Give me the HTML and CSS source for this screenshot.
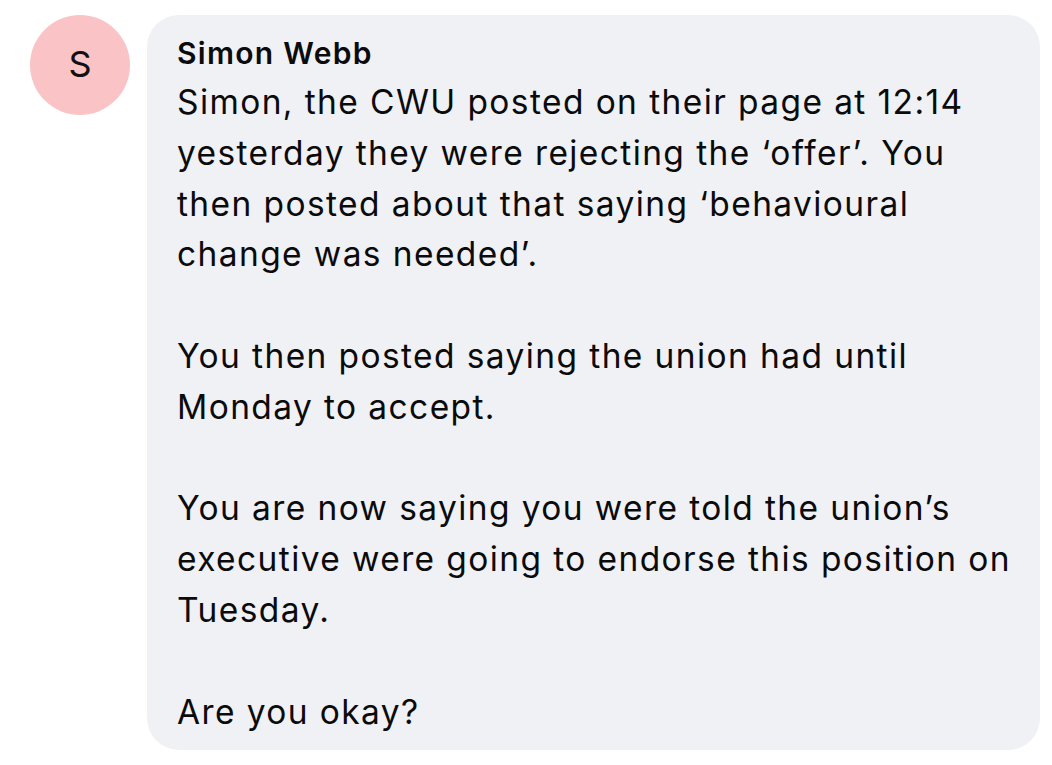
FILE: index.html
```html
<!DOCTYPE html>
<html>
<head>
<meta charset="utf-8">
<link rel="stylesheet" href="styles.css">
</head>
<body>
<div class="row">
  <div class="avatar">S</div>
  <div class="bubble">
    <div class="name">Simon Webb</div>
    <div class="text">
      <p>Simon, the CWU posted on their page at 12:14<br>yesterday they were rejecting the ‘offer’. You<br>then posted about that saying ‘behavioural<br>change was needed’.</p>
      <p>You then posted saying the union had until<br>Monday to accept.</p>
      <p>You are now saying you were told the union’s<br>executive were going to endorse this position on<br>Tuesday.</p>
      <p>Are you okay?</p>
    </div>
  </div>
</div>
</body>
</html>
```
FILE: styles.css
```css
html, body {
  margin: 0;
  padding: 0;
  background: #ffffff;
}
body {
  font-family: Inter, "Liberation Sans", sans-serif;
  color: #0b0b0c;
}
.row {
  display: flex;
  align-items: flex-start;
  gap: 17px;
  padding: 15px 0 0 30px;
}
.avatar {
  flex: none;
  width: 100px;
  height: 100px;
  border-radius: 50%;
  background: #fac4c6;
  display: flex;
  align-items: center;
  justify-content: center;
  font-size: 36px;
  color: #111;
  padding-bottom: 3px;
  box-sizing: border-box;
}
.bubble {
  flex: none;
  width: 893px;
  height: 735px;
  box-sizing: border-box;
  background: #f0f1f5;
  border-radius: 32px;
  padding: 20px 10px 0 30px;
}
.name {
  font-size: 30px;
  font-weight: 600;
  line-height: 36px;
  letter-spacing: 1.3px;
}
.text {
  font-size: 33.5px;
  line-height: 50.8px;
  letter-spacing: 1.4px;
  margin-top: 6px;
}
.text p {
  margin: 0 0 50.8px 0;
}
.text p:last-child {
  margin-bottom: 0;
}
```
